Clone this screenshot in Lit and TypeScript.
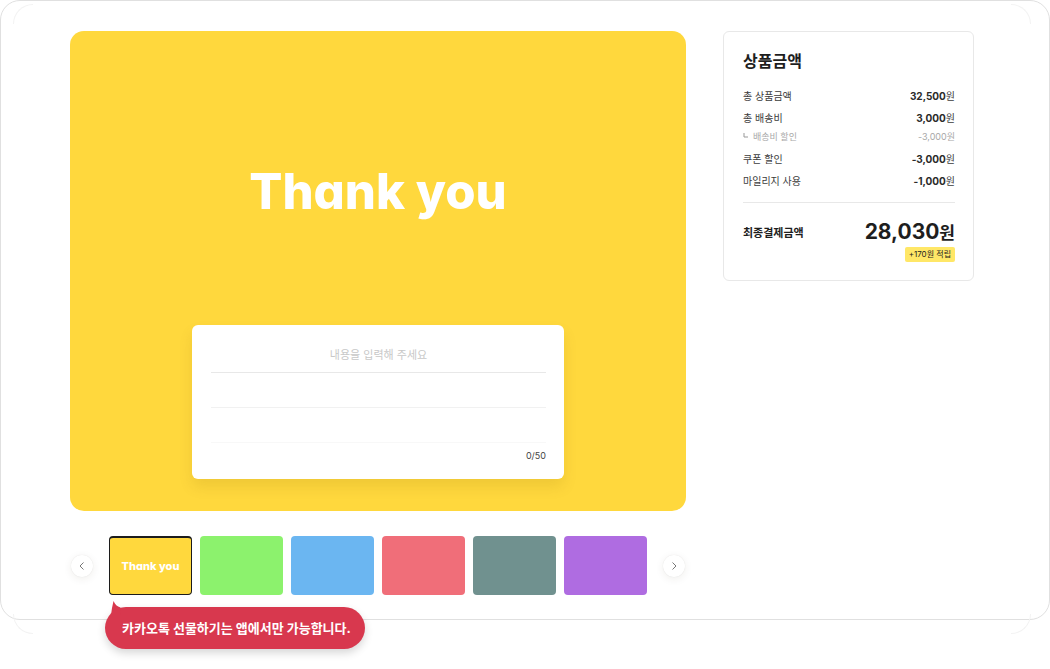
import { LitElement, html, css, svg } from "lit";
import { customElement, state } from "lit/decorators.js";
import { classMap } from "lit/directives/class-map.js";
import { styleMap } from "lit/directives/style-map.js";

interface CardDesign {
  name: string;
  color: string;
  title?: string;
}

const DESIGNS: CardDesign[] = [
  { name: "노랑", color: "#ffd83d", title: "Thank you" },
  { name: "연두", color: "#8cf26d" },
  { name: "하늘", color: "#6bb6f1" },
  { name: "분홍", color: "#f06e79" },
  { name: "청록", color: "#70918f" },
  { name: "보라", color: "#af6ce1" },
];

const MAX_LENGTH = 50;

@customElement("gift-card-editor")
class GiftCardEditor extends LitElement {
  @state() private selected = 0;
  @state() private message = "";

  static styles = css`
    :host {
      display: block;
      min-width: 0;
    }
    button,
    textarea {
      font-family: inherit;
      margin: 0;
      border: 0;
      padding: 0;
    }
    .preview {
      display: flex;
      flex-direction: column;
      align-items: center;
      box-sizing: border-box;
      min-height: 480px;
      padding: 28px 20px 32px;
      border-radius: 14px;
    }
    .title {
      flex: 1;
      display: flex;
      align-items: center;
      margin: 0;
      color: #fff;
      font-size: 49px;
      font-weight: 800;
      line-height: 60px;
      font-feature-settings: "cv11";
    }
    .message {
      box-sizing: border-box;
      width: 100%;
      max-width: 372px;
      padding: 13px 18px 15px 19px;
      border-radius: 6px;
      background: #fff;
      box-shadow: 0 8px 14px rgba(120, 90, 0, 0.12);
    }
    .text {
      display: block;
      width: 100%;
      height: 105px;
      resize: none;
      outline: none;
      overflow: hidden;
      color: #333;
      font-size: 11px;
      line-height: 35px;
      text-align: center;
      background:
        linear-gradient(#e8e8e8, #e8e8e8) 0 34px / 100% 1px no-repeat,
        linear-gradient(#f1f1f1, #f1f1f1) 0 69px / 100% 1px no-repeat,
        linear-gradient(#f8f8f8, #f8f8f8) 0 104px / 100% 1px no-repeat;
    }
    .text::placeholder {
      color: #c8c8c8;
      opacity: 1;
    }
    .count {
      display: block;
      padding-top: 5px;
      color: #444;
      font-size: 9px;
      line-height: 16px;
      text-align: right;
    }
    .picker {
      display: flex;
      align-items: center;
      gap: 16px;
      margin-top: 25px;
      padding: 0 1px;
    }
    .arrow {
      flex: none;
      display: grid;
      place-items: center;
      width: 22px;
      height: 22px;
      border-radius: 50%;
      background: #fff;
      box-shadow:
        0 0 1px rgba(0, 0, 0, 0.12),
        0 2px 8px rgba(60, 50, 20, 0.08);
    }
    .list {
      position: relative;
      flex: 1;
      display: grid;
      grid-template-columns: repeat(6, minmax(0, 1fr));
      gap: 8px;
    }
    .swatch {
      box-sizing: border-box;
      height: 59px;
      border-radius: 4px;
      color: #fff;
      font-size: 11px;
      font-weight: 800;
      font-feature-settings: "cv11";
    }
    .swatch.on {
      border: 1px solid #1c1c1c;
      border-top-width: 2px;
    }
    .tip {
      position: absolute;
      left: -4px;
      top: calc(100% + 12px);
      padding: 0 14px 0 17px;
      border-radius: 21px;
      background: #d8384e;
      box-shadow: 0 4px 8px rgba(0, 0, 0, 0.16);
      color: #fff;
      font-size: 13px;
      font-weight: 700;
      line-height: 42px;
      white-space: nowrap;
    }
    .tail {
      position: absolute;
      left: 6px;
      top: -6px;
    }
  `;

  private move(step: number) {
    this.selected = (this.selected + step + DESIGNS.length) % DESIGNS.length;
  }

  private arrow(label: string, step: number, path: string) {
    return html`<button class="arrow" type="button" aria-label=${label} @click=${() => this.move(step)}>
      <svg width="10" height="10" viewBox="0 0 10 10" fill="none" stroke="#777" stroke-width="1">
        ${svg`<path d=${path} />`}
      </svg>
    </button>`;
  }

  render() {
    const design = DESIGNS[this.selected];
    return html`
      <section class="preview" style=${styleMap({ background: design.color })}>
        <h1 class="title">${design.title ?? ""}</h1>
        <div class="message">
          <textarea
            class="text"
            aria-label="메시지"
            maxlength=${MAX_LENGTH}
            placeholder="내용을 입력해 주세요"
            .value=${this.message}
            @input=${(e: Event) => (this.message = (e.target as HTMLTextAreaElement).value)}
          ></textarea>
          <span class="count">${this.message.length}/${MAX_LENGTH}</span>
        </div>
      </section>
      <div class="picker">
        ${this.arrow("이전", -1, "M6.5 1.5 3 5l3.500 3.500")}
        <div class="list">
          ${DESIGNS.map(
            (d, i) => html`<button
              type="button"
              class=${classMap({ swatch: true, on: i === this.selected })}
              style=${styleMap({ background: d.color })}
              aria-label=${d.name}
              aria-pressed=${i === this.selected ? "true" : "false"}
              @click=${() => (this.selected = i)}
            >${d.title ?? ""}</button>`
          )}
          <div class="tip" role="note">
            <svg class="tail" width="14" height="14" viewBox="0 0 14 14" aria-hidden="true">
              <path d="M2.500 0C4 3.500 6 5.500 9.500 6.500L9 14H0L1 7Z" fill="#d8384e" />
            </svg>
            카카오톡 선물하기는 앱에서만 가능합니다.
          </div>
        </div>
        ${this.arrow("다음", 1, "M3.500 1.500 7 5 3.500 8.500")}
      </div>
    `;
  }
}

interface PriceLine {
  label: string;
  amount: string;
  sub?: boolean;
}

const LINES: PriceLine[] = [
  { label: "총 상품금액", amount: "32,500" },
  { label: "총 배송비", amount: "3,000" },
  { label: "배송비 할인", amount: "-3,000", sub: true },
  { label: "쿠폰 할인", amount: "-3,000" },
  { label: "마일리지 사용", amount: "-1,000" },
];

@customElement("price-summary")
class PriceSummary extends LitElement {
  static styles = css`
    :host {
      display: block;
      box-sizing: border-box;
      padding: 17px 18px 18px 19px;
      border: 1px solid #e8e8e8;
      border-radius: 6px;
      color: #1e1e1e;
    }
    .heading {
      margin: 0 0 15px;
      font-size: 16px;
      font-weight: 700;
      line-height: 24px;
    }
    .lines {
      display: grid;
      gap: 6px;
      margin: 0;
      padding-bottom: 13px;
      border-bottom: 1px solid #e8e8e8;
    }
    .line {
      display: flex;
      justify-content: space-between;
      color: #3c3c3c;
      font-size: 10px;
      line-height: 16px;
    }
    .line.sub {
      margin-top: -3px;
      color: #a8a8a8;
      font-size: 9px;
    }
    .corner {
      margin-right: 5px;
      vertical-align: 2px;
    }
    .amount {
      margin: 0;
    }
    .number {
      color: #2a2a2a;
      font-weight: 700;
    }
    .sub .number {
      color: inherit;
      font-weight: 400;
    }
    .total {
      display: flex;
      align-items: center;
      justify-content: space-between;
      margin-top: 15px;
      font-size: 11px;
      font-weight: 700;
      line-height: 28px;
    }
    .sum {
      display: flex;
      align-items: baseline;
      font-size: 21px;
    }
    .won {
      font-size: 17px;
    }
    .reward {
      display: block;
      width: fit-content;
      margin-left: auto;
      padding: 0 4px;
      border-radius: 2px;
      background: #ffe767;
      font-size: 8px;
      font-weight: 400;
      line-height: 15px;
    }
  `;

  render() {
    return html`
      <h2 class="heading">상품금액</h2>
      <dl class="lines">
        ${LINES.map(
          (l) => html`<div class=${classMap({ line: true, sub: !!l.sub })}>
            <dt>${l.sub
              ? html`<svg class="corner" width="5" height="5" viewBox="0 0 5 5" aria-hidden="true"><path d="M1 0V4H5" fill="none" stroke="#999" /></svg>`
              : ""}${l.label}</dt>
            <dd class="amount"><span class="number">${l.amount}</span>원</dd>
          </div>`
        )}
      </dl>
      <div class="total">
        <span>최종결제금액</span>
        <span class="sum">28,030<span class="won">원</span></span>
      </div>
      <span class="reward">+170원 적립</span>
    `;
  }
}

@customElement("app-root")
class AppRoot extends LitElement {
  static styles = css`
    :host {
      display: block;
      min-height: 100vh;
      background: #fff;
      font-family: Inter, "Noto Sans CJK KR", sans-serif;
    }
    .frame {
      position: relative;
      display: grid;
      grid-template-columns: minmax(0, 1fr) 251px;
      align-items: start;
      gap: 37px;
      padding: 30px 75px 24px 69px;
      border: 1px solid #e0e0e0;
      border-radius: 20px;
    }
    .arc {
      position: absolute;
      box-sizing: border-box;
      width: 20px;
      height: 20px;
      border: 0 solid #f3f3f3;
    }
    .tl {
      left: 12px;
      top: 3px;
      border-width: 1px 0 0 1px;
      border-top-left-radius: 20px;
    }
    .tr {
      right: 18px;
      top: 3px;
      border-width: 1px 1px 0 0;
      border-top-right-radius: 20px;
    }
    .bl {
      left: 12px;
      bottom: -15px;
      border-width: 0 0 1px 1px;
      border-bottom-left-radius: 20px;
    }
    .br {
      right: 18px;
      bottom: -15px;
      border-width: 0 1px 1px 0;
      border-bottom-right-radius: 20px;
    }
  `;

  render() {
    return html`
      <main class="frame">
        <span class="arc tl"></span>
        <span class="arc tr"></span>
        <span class="arc bl"></span>
        <span class="arc br"></span>
        <gift-card-editor></gift-card-editor>
        <price-summary></price-summary>
      </main>
    `;
  }
}
